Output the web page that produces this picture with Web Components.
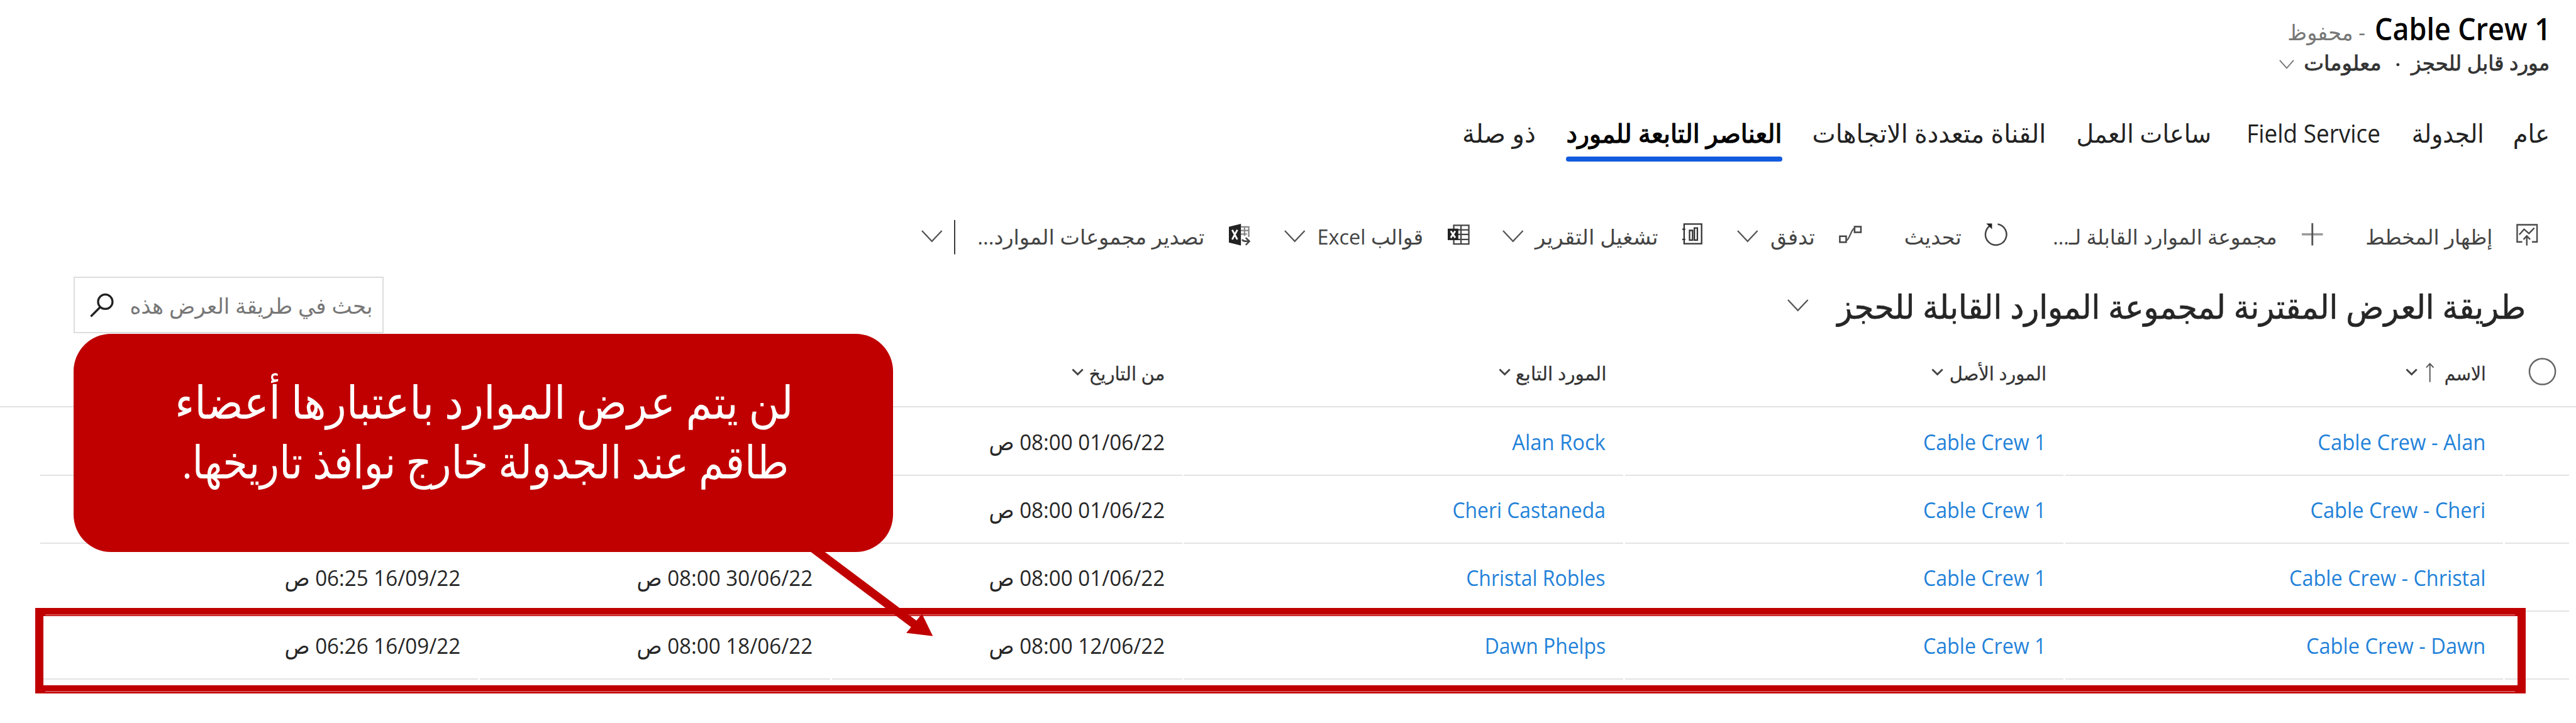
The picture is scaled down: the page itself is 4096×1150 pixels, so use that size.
<!DOCTYPE html>
<html lang="ar" dir="rtl">
<head>
<meta charset="utf-8">
<title>Cable Crew 1</title>
<style>
html,body{margin:0;background:#fff;overflow:hidden}
body{width:4096px;height:1150px;font-family:"Open Sans","DejaVu Sans",sans-serif;color:#222}
</style>
</head>
<body>
<crew-page></crew-page>
<script>
/* One line of text, condensed or widened to fill the width it is given. */
class FitText extends HTMLElement{
  connectedCallback(){
    const root=this.attachShadow({mode:'open'});
    root.innerHTML=`<style>:host{display:block;flex:none;white-space:nowrap;line-height:1;direction:rtl}
      span{display:inline-block;transform-origin:100% 50%}</style><span><slot></slot></span>`;
    const s=root.querySelector('span');
    this.style.width=this.getAttribute('w')+'px';
    const k=this.getBoundingClientRect().width/s.getBoundingClientRect().width;
    s.style.transform=`scaleX(${k})`;
  }
}

const ICONS={
  chev:'<path d="M1 1 17.5 18.500 34 1" fill="none" stroke="#555" stroke-width="2.4"/>',
  chevm:'<path d="M1 1 12.500 14 24 1" fill="none" stroke="#777" stroke-width="2"/>',
  chevs:'<path d="M1.500 1.500 10 10 18.500 1.500" fill="none" stroke="#444" stroke-width="3"/>',
  chart:'<path d="M10 30H1.500V1.500H34.500V30H26M5 18 13 9 21 16 30 7M17.500 36V21M12 26 17.500 20 23 26" fill="none" stroke="#4a4a4a" stroke-width="2.500"/>',
  plus:'<path d="M0 18.500H35" stroke="#999" stroke-width="3.500"/><path d="M17.500 0V37" stroke="#555" stroke-width="3"/>',
  refresh:'<path d="M23.500 1.500A17.500 17.500 0 1 1 12 3.500" fill="none" stroke="#444" stroke-width="2.600"/><path d="M4.500 0.500H14V10Z" fill="#222"/>',
  flow:'<path d="M1.500 17.500H12V27.500H1.500ZM26 1.500H36.500V11H26Z" fill="none" stroke="#444" stroke-width="2.600"/><path d="M12 25C18 23 20 6 26 4" fill="none" stroke="#555" stroke-width="2.400"/>',
  report:'<path d="M3 1.500H32V34H3ZM0 10H5M0 27H5M12 12H17V28H12ZM20 8H25V28H20Z" fill="none" stroke="#333" stroke-width="2.400"/>',
  excel:'<path d="M10 1.500H35V32.500H10ZM10 9H35M10 16.500H35M10 25H35M22 1V33" fill="none" stroke="#444" stroke-width="2.400"/><path d="M0 7H17.500V26H0Z" fill="#222"/><path d="M5 11 12.500 22M12.500 11 5 22" stroke="#fff" stroke-width="3"/>',
  excelout:'<path d="M20 5H33V22M20 11H33M20 17H30M26 5V20" fill="none" stroke="#888" stroke-width="2.400"/><path d="M0 5 20 0V36L0 31Z" fill="#222"/><path d="M5.500 10 14 26M14 10 5.500 26" stroke="#fff" stroke-width="3"/><path d="M22 26C24 30 28 29 33 29M28 23 34 29 28 35" fill="none" stroke="#444" stroke-width="2.600"/>',
  bar:'<path d="M1 0V57" stroke="#333" stroke-width="2"/>',
  up:'<path d="M7 1V32M1 8 7 1.500 13 8" fill="none" stroke="#555" stroke-width="2"/>',
  ring:'<circle cx="22.500" cy="24" r="21.500" fill="none" stroke="#666" stroke-width="2.600"/>',
  search:'<circle cx="25.500" cy="13.500" r="12" fill="none" stroke="#222" stroke-width="3.400"/><path d="M17 22.500 1.500 38" stroke="#222" stroke-width="3.600"/>',
  dot:'<circle cx="3" cy="3" r="2.600" fill="#333"/>'
};
class UiIcon extends HTMLElement{
  connectedCallback(){
    const w=this.getAttribute('w'),h=this.getAttribute('h');
    this.attachShadow({mode:'open'}).innerHTML=`<style>:host{display:block;flex:none;align-self:flex-start}svg{display:block;overflow:visible}</style>
      <svg width="${w}" height="${h}">${ICONS[this.getAttribute('name')]}</svg>`;
  }
}

/* Right-to-left line: items are {l,r} spans, kept apart by margins; texts share one baseline. */
const line=(items,start,base)=>{
  let x=start;
  return `<i class="strut" style="height:${base}px"></i>`+items.map(o=>{
    const g=x-o.r; x=o.l;
    if(o.icon) return `<ui-icon name="${o.icon}" w="${o.r-o.l}" h="${o.h}" style="margin-right:${g}px;margin-top:${o.y}px"></ui-icon>`;
    return `<fit-text class="${o.c||''}" w="${o.r-o.l}" style="margin-right:${g}px">${o.t}</fit-text>`;
  }).join('');
};
const LINE_CSS=`:host,.line{display:flex;flex-direction:row;align-items:baseline;direction:rtl;box-sizing:border-box}.strut{width:0;flex:none}`;

class RecordHeader extends HTMLElement{
  connectedCallback(){
    this.attachShadow({mode:'open'}).innerHTML=`<style>${LINE_CSS}:host{display:block;height:160px}
      .line{height:80px}.name{font-size:51px;font-weight:600;color:#000}.saved{font-size:36px;color:#777}
      .sub{font-size:34px;color:#333;-webkit-text-stroke:.8px #333}</style>
      <div class="line">${line([{l:3942,r:4234,t:'Cable Crew 1',c:'name'},{l:3797,r:3926,t:'- محفوظ',c:'saved'}],4276,66.5)}</div>
      <div class="line">${line([{l:4002,r:4232,t:'مورد قابل للحجز',c:'sub'},{l:3977,r:3983,icon:'dot',h:6,y:24},{l:3824,r:3953,t:'معلومات',c:'sub'},{l:3783,r:3808,icon:'chevm',h:15,y:19}],4276,37)}</div>`;
  }
}

class TabList extends HTMLElement{
  connectedCallback(){
    const tabs=[{l:4171,r:4232,t:'عام'},{l:4003,r:4123,t:'الجدولة'},{l:3729,r:3951,t:'Field Service',c:'lat'},
      {l:3446,r:3670,t:'ساعات العمل'},{l:3008,r:3396,t:'القناة متعددة الاتجاهات'},
      {l:2600,r:2958,t:'العناصر التابعة للمورد',c:'on'},{l:2427,r:2549,t:'ذو صلة'}];
    this.attachShadow({mode:'open'}).innerHTML=`<style>${LINE_CSS}:host{height:180px;font-size:42px;color:#222}
      .on{color:#000;-webkit-text-stroke:1.3px #000;position:relative}
      .on::after{content:"";position:absolute;left:-1px;right:0;top:59px;height:8.500px;border-radius:4px;background:#125bdf}</style>${line(tabs,4276,77)}`;
  }
}

class CommandBar extends HTMLElement{
  connectedCallback(){
    const c=(l,r)=>({l,r,icon:'chev',h:20,y:42});
    const items=[{l:4177,r:4213,icon:'chart',h:37,y:32},{l:3927,r:4138,t:'إظهار المخطط'},
      {l:3821,r:3856,icon:'plus',h:37,y:31},{l:3408,r:3780,t:'مجموعة الموارد القابلة لـ...'},
      {l:3293,r:3331,icon:'refresh',h:37,y:31},{l:3161,r:3256,t:'تحديث'},
      {l:3052,r:3090,icon:'flow',h:30,y:35},{l:2939,r:3013,t:'تدفق'},c(2883,2918),
      {l:2792,r:2825,icon:'report',h:36,y:31},{l:2548,r:2752,t:'تشغيل التقرير'},c(2494,2529),
      {l:2403,r:2439,icon:'excel',h:34,y:33},{l:2186,r:2362,t:'قوالب Excel'},c(2131,2166),
      {l:2040,r:2074,icon:'excelout',h:36,y:32},{l:1622,r:1999,t:'تصدير مجموعات الموارد...'},
      {l:1583,r:1585,icon:'bar',h:57,y:25},c(1529,1564)];
    this.attachShadow({mode:'open'}).innerHTML=`<style>${LINE_CSS}:host{height:110px;font-size:35px;color:#444}</style>${line(items,4276,66)}`;
  }
}

class SearchBox extends HTMLElement{
  connectedCallback(){
    this.attachShadow({mode:'open'}).innerHTML=`<style>${LINE_CSS}:host{flex:none;width:515px;height:94px;border:3px solid #ddd;align-self:flex-start;font-size:36px;color:#777}</style>
      ${line([{l:93,r:496,t:'بحث في طريقة العرض هذه'},{l:26,r:65,icon:'search',h:39,y:26}],512,60)}`;
  }
}
class ViewBar extends HTMLElement{
  connectedCallback(){
    this.attachShadow({mode:'open'}).innerHTML=`<style>${LINE_CSS}:host{height:110px;font-size:55px;color:#262626}fit-text{-webkit-text-stroke:.7px #262626}
      search-box{margin-right:auto;margin-left:122px;margin-top:9px}</style>
      ${line([{l:3049,r:4192,t:'طريقة العرض المقترنة لمجموعة الموارد القابلة للحجز'},{l:2967,r:3002,icon:'chev',h:20,y:47}],4276,79)}<search-box></search-box>`;
  }
}

class GridHead extends HTMLElement{
  connectedCallback(){
    const c=(l,r)=>({l,r,icon:'chevs',h:11,y:52});
    this.attachShadow({mode:'open'}).innerHTML=`<style>${LINE_CSS}:host{height:117px;border-bottom:3px solid #e3e3e3;font-size:31px;color:#333}fit-text{-webkit-text-stroke:.3px #333}</style>
      ${line([{l:4198,r:4243,icon:'ring',h:48,y:33},{l:4057,r:4126,t:'الاسم'},{l:4026,r:4040,icon:'up',h:33,y:42},c(3993,4013),
        {l:3236,r:3397,t:'المورد الأصل'},c(3206,3226),{l:2516,r:2667,t:'المورد التابع'},c(2488,2508),{l:1808,r:1934,t:'من التاريخ'},c(1779,1799)],4276,72)}`;
  }
}
class GridRow extends HTMLElement{
  connectedCallback(){
    const v=this.getAttribute('values').split('|'),w=this.getAttribute('widths').split(',');
    const cell=i=>`<div class="c${i}">${line(v[i]?[{l:0,r:+w[i],t:v[i]}]:[],+w[i]+29,70)}</div>`;
    this.attachShadow({mode:'open'}).innerHTML=`<style>${LINE_CSS}
      :host{align-items:stretch;gap:3px;height:112.800px;padding:0 12px 0 67px;font-size:37px;color:#262626}
      div{display:flex;align-items:baseline;direction:rtl;box-sizing:border-box;border-bottom:3px solid #e3e3e3;flex:none}
      .pick{width:106px}.c0,.c1,.c2{color:#2382d9}.c0{width:727px}.c1{width:728px}.c2{width:729px}.c3{width:581px}.c4{width:582px}.c5{flex:1}
      </style><div class="pick"></div>${[0,1,2,3,4,5].map(cell).join('')}`;
  }
}

class CalloutNote extends HTMLElement{
  connectedCallback(){
    this.attachShadow({mode:'open'}).innerHTML=`<style>${LINE_CSS}
      :host{display:block;position:absolute;left:122px;top:554px;width:1360px;height:363px;border-radius:62px;background:#c00000;color:#fff;font-size:76px;font-family:"Liberation Serif","DejaVu Sans",serif}
      .a{height:170px}.b{height:150px}</style>
      <div class="line a">${line([{l:168,r:1195,t:'لن يتم عرض الموارد باعتبارها أعضاء'}],1360,141.500)}</div>
      <div class="line b">${line([{l:180,r:1187,t:'طاقم عند الجدولة خارج نوافذ تاريخها.'}],1360,70)}</div>`;
  }
}
class RowMarker extends HTMLElement{
  connectedCallback(){
    this.attachShadow({mode:'open'}).innerHTML=`<style>:host{display:block;position:absolute;left:58px;top:1009px;width:4134px;height:142px;box-sizing:border-box;border:14px solid #c00000}
      :host::before,:host::after{content:"";position:absolute;left:4px;right:4px;height:2px;background:#d65050}
      :host::before{top:-3px}:host::after{bottom:-12px}</style>`;
  }
}
class PointerArrow extends HTMLElement{
  connectedCallback(){
    this.attachShadow({mode:'open'}).innerHTML=`<style>:host{display:block;position:absolute;left:1340px;top:905px}svg{display:block}</style>
      <svg width="220" height="160"><path d="M2 0 182 135" stroke="#c00000" stroke-width="14"/><path d="M208 151 164 146 190 114Z" fill="#c00000"/></svg>`;
  }
}

class CrewPage extends HTMLElement{
  connectedCallback(){
    const d='01/06/22 08:00 ص';
    const rows=[
      [`Cable Crew - Alan|Cable Crew 1|Alan Rock|${d}||`,'279,204,155,292,0,0'],
      [`Cable Crew - Cheri|Cable Crew 1|Cheri Castaneda|${d}||`,'291,204,254,292,0,0'],
      [`Cable Crew - Christal|Cable Crew 1|Christal Robles|${d}|30/06/22 08:00 ص|16/09/22 06:25 ص`,'326,204,231,292,292,292'],
      [`Cable Crew - Dawn|Cable Crew 1|Dawn Phelps|12/06/22 08:00 ص|18/06/22 08:00 ص|16/09/22 06:26 ص`,'298,204,201,292,292,292']];
    this.attachShadow({mode:'open'}).innerHTML=`<style>:host{display:block;position:relative;width:4276px;height:1201px;zoom:.95790;overflow:hidden;background:#fff}</style>
      <record-header></record-header><tab-list></tab-list><command-bar></command-bar><view-bar></view-bar><grid-head></grid-head>
      ${rows.map(r=>`<grid-row values="${r[0]}" widths="${r[1]}"></grid-row>`).join('')}
      <row-marker></row-marker><callout-note></callout-note><pointer-arrow></pointer-arrow>`;
  }
}
[['fit-text',FitText],['ui-icon',UiIcon],['record-header',RecordHeader],['tab-list',TabList],['command-bar',CommandBar],['search-box',SearchBox],
 ['view-bar',ViewBar],['grid-head',GridHead],['grid-row',GridRow],['callout-note',CalloutNote],['row-marker',RowMarker],['pointer-arrow',PointerArrow],['crew-page',CrewPage]]
 .forEach(([n,c])=>customElements.define(n,c));
</script>
</body>
</html>
